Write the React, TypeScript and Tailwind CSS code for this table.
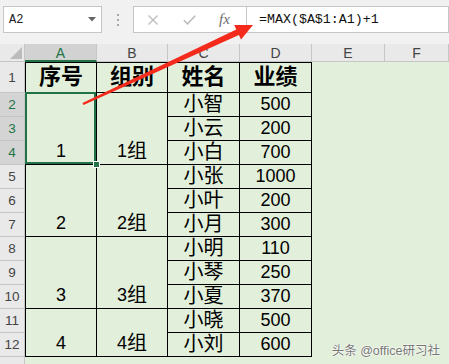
import React from "react";

type Row = { n: number; name: string; score: string; group?: { idx: string; span: string; selected?: boolean } };

const rows: Row[] = [
  { n: 2, name: "小智", score: "500", group: { idx: "1", span: "row-span-3", selected: true } },
  { n: 3, name: "小云", score: "200" },
  { n: 4, name: "小白", score: "700" },
  { n: 5, name: "小张", score: "1000", group: { idx: "2", span: "row-span-3" } },
  { n: 6, name: "小叶", score: "200" },
  { n: 7, name: "小月", score: "300" },
  { n: 8, name: "小明", score: "110", group: { idx: "3", span: "row-span-3" } },
  { n: 9, name: "小琴", score: "250" },
  { n: 10, name: "小夏", score: "370" },
  { n: 11, name: "小晓", score: "500", group: { idx: "4", span: "row-span-2" } },
  { n: 12, name: "小刘", score: "600" },
];

function RowHead({ n, selected }: { n: number | string; selected?: boolean }) {
  return (
    <div
      className={
        selected
          ? "col-start-1 flex items-center justify-center border-r border-b border-[#c6c6c6] bg-[#d4d4d4] pt-[2px] text-[13.5px] text-[#217346]"
          : "col-start-1 flex items-center justify-center border-r border-b border-[#c6c6c6] bg-[#e9e9e9] pt-[2px] text-[13.5px] text-[#444]"
      }
    >
      {n}
    </div>
  );
}

function ColHead({ label, selected }: { label: string; selected?: boolean }) {
  return (
    <div
      className={
        selected
          ? "flex items-center justify-center border-r border-b-2 border-r-[#c6c6c6] border-b-[#217346] bg-[#d2d2d2] pt-[2px] text-[14px] text-[#217346]"
          : "flex items-center justify-center border-r border-b border-[#c6c6c6] bg-[#e9e9e9] pt-[2px] text-[14px] text-[#444]"
      }
    >
      {label}
    </div>
  );
}

export default function App() {
  return (
    <div className="relative h-[364px] w-[449px] overflow-hidden bg-[#f1f1f1] font-['Liberation_Sans','Noto_Sans_CJK_SC',sans-serif] text-black">
      {/* Formula bar */}
      <div className="flex h-[44px] items-start pl-[3px] pt-[6px]">
        <div className="flex h-[27px] w-[99px] items-center justify-between border border-[#c6c6c6] bg-white pl-[5px] pr-[5px]">
          <span className="font-['Liberation_Mono',monospace] text-[12px] text-[#222]">A2</span>
          <svg width="8" height="5" viewBox="0 0 8 5">
            <path d="M0 0H8L4 4.5Z" fill="#666" />
          </svg>
        </div>
        <div className="flex h-[27px] w-[31px] flex-col items-center justify-center gap-[3px]">
          <div className="h-[2px] w-[2px] bg-[#a6a6a6]" />
          <div className="h-[2px] w-[2px] bg-[#a6a6a6]" />
          <div className="h-[2px] w-[2px] bg-[#a6a6a6]" />
        </div>
        <div className="flex h-[27px] w-[114px] items-center border border-[#c6c6c6] bg-white">
          <svg width="10" height="10" viewBox="0 0 10 10" className="ml-[14px]">
            <path d="M0.5 0.5L9.5 9.5M9.5 0.5L0.5 9.5" stroke="#bdbdbd" strokeWidth="1.4" />
          </svg>
          <svg width="13" height="10" viewBox="0 0 13 10" className="ml-[25px]">
            <path d="M0.8 5.2L4.5 8.8L12.2 0.8" stroke="#bdbdbd" strokeWidth="1.6" fill="none" />
          </svg>
          <span className="ml-[23px] font-['Liberation_Serif',serif] text-[15px] italic leading-none text-[#6b6b6b]">fx</span>
        </div>
        <div className="flex h-[27px] flex-1 items-center border border-l-0 border-[#c6c6c6] bg-white pl-[12px]">
          <span className="font-['Liberation_Mono',monospace] text-[13.3px] text-[#111]">=MAX($A$1:A1)+1</span>
        </div>
      </div>

      {/* Sheet */}
      <div className="grid h-[320px] grid-cols-[25px_72px_71px_72px_72px_73px_1fr] grid-rows-[18px_31px_repeat(11,24px)_1fr] bg-[#e2efda]">
        <div className="relative border-r border-b border-[#c6c6c6] bg-[#e9e9e9]">
          <svg width="12" height="12" viewBox="0 0 12 12" className="absolute bottom-[2px] right-[2px]">
            <path d="M12 0V12H0Z" fill="#bcbcbc" />
          </svg>
        </div>
        <ColHead label="A" selected />
        <ColHead label="B" />
        <ColHead label="C" />
        <ColHead label="D" />
        <ColHead label="E" />
        <ColHead label="F" />

        {/* row 1 */}
        <RowHead n={1} />
        <div className="flex items-end justify-center border border-black pb-[1px] text-[22px] font-bold leading-[28px]">序号</div>
        <div className="flex items-end justify-center border-t border-r border-b border-black pb-[1px] text-[22px] font-bold leading-[28px]">组别</div>
        <div className="flex items-end justify-center border-t border-r border-b border-black pb-[1px] text-[22px] font-bold leading-[28px]">姓名</div>
        <div className="flex items-end justify-center border-t border-r border-b border-black pb-[1px] text-[22px] font-bold leading-[28px]">业绩</div>

        {rows.map((r) => (
          <React.Fragment key={r.n}>
            <RowHead n={r.n} selected={r.n <= 4} />
            {r.group && (
              <div
                className={
                  r.group.span +
                  " relative flex items-end justify-center border-r border-b border-l border-black pb-[1px] text-[18px] leading-[24px]"
                }
              >
                {r.group.idx}
                {r.group.selected && (
                  <>
                    <div className="absolute -top-[1px] -left-[1px] right-0 bottom-0 border-2 border-[#217346]" />
                    <div className="absolute -right-[4px] -bottom-[4px] z-10 h-[7px] w-[7px] border border-white bg-[#217346]" />
                  </>
                )}
              </div>
            )}
            {r.group && (
              <div
                className={
                  r.group.span +
                  " flex items-end justify-center border-r border-b border-black pb-[1px] leading-[24px]"
                }
              >
                <span className="text-[18px]">{r.group.idx}</span>
                <span className="text-[20px]">组</span>
              </div>
            )}
            <div className="flex items-end justify-center border-r border-b border-black text-[20px] leading-[24px]">{r.name}</div>
            <div className="flex items-end justify-center border-r border-b border-black pb-[1px] text-[18px] leading-[22px]">{r.score}</div>
          </React.Fragment>
        ))}
        <div className="col-start-1 border-r border-[#c6c6c6] bg-[#e9e9e9]" />
      </div>

      {/* Red arrow overlay */}
      <svg className="pointer-events-none absolute left-0 top-0" width="449" height="364" viewBox="0 0 449 364">
        <polygon
          points="83.5,105.1 238.9,34.9 241,39.4 253,25 234.2,24.9 236.3,29.5 82.5,102.9"
          fill="#f42a1c"
        />
      </svg>

      {/* Watermark */}
      <div className="absolute right-[9px] bottom-[7px] text-[12.5px] leading-none text-[#777] [text-shadow:0_0_2px_#fff,0_0_2px_#fff]">
        头条 @office研习社
      </div>
    </div>
  );
}
